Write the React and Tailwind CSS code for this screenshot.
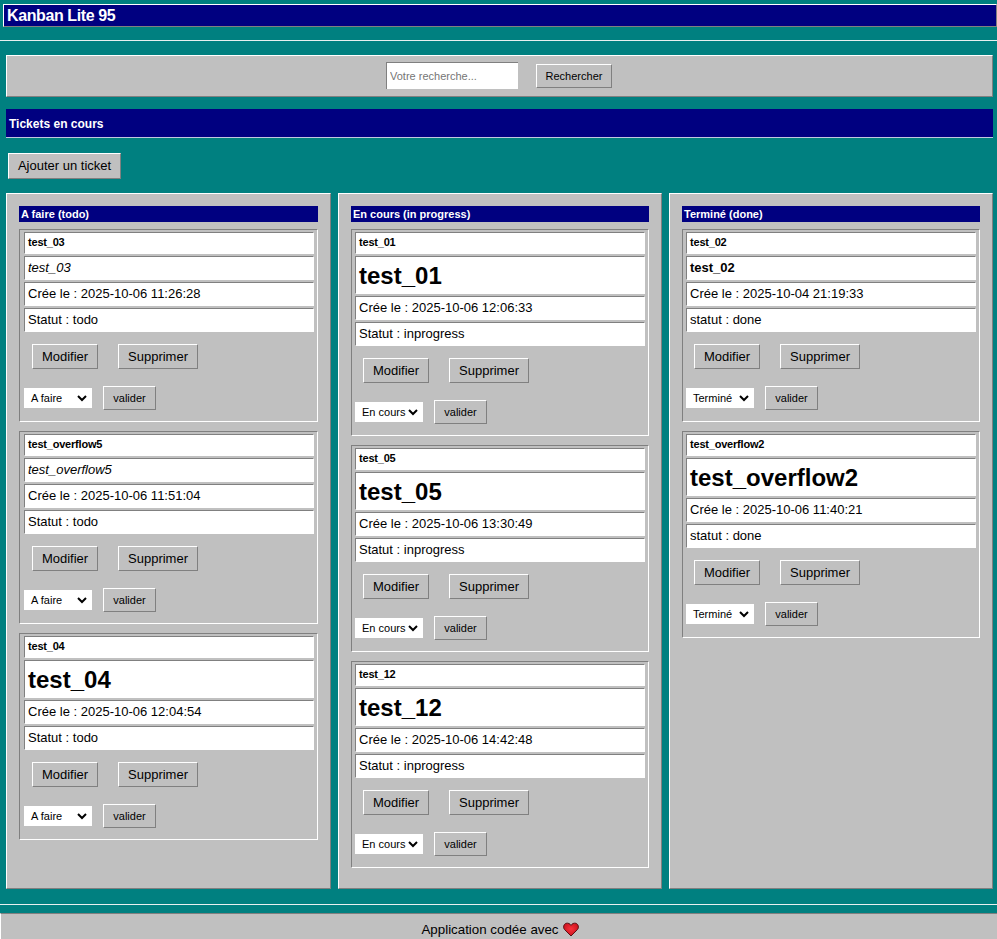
const columns = [
  {
    title: 'A faire (todo)',
    option: 'A faire',
    inset: 'pl-[4px]',
    tickets: [
      { name: 'test_03', desc: 'test_03', kind: 'italic', date: '2025-10-06 11:26:28', status: 'Statut : todo' },
      { name: 'test_overflow5', desc: 'test_overflow5', kind: 'italic', date: '2025-10-06 11:51:04', status: 'Statut : todo' },
      { name: 'test_04', desc: 'test_04', kind: 'big', date: '2025-10-06 12:04:54', status: 'Statut : todo' },
    ],
  },
  {
    title: 'En cours (in progress)',
    option: 'En cours',
    inset: 'pl-[3px]',
    tickets: [
      { name: 'test_01', desc: 'test_01', kind: 'big', date: '2025-10-06 12:06:33', status: 'Statut : inprogress' },
      { name: 'test_05', desc: 'test_05', kind: 'big', date: '2025-10-06 13:30:49', status: 'Statut : inprogress' },
      { name: 'test_12', desc: 'test_12', kind: 'big', date: '2025-10-06 14:42:48', status: 'Statut : inprogress' },
    ],
  },
  {
    title: 'Terminé (done)',
    option: 'Terminé',
    inset: 'pl-[3px]',
    tickets: [
      { name: 'test_02', desc: 'test_02', kind: 'bold', date: '2025-10-04 21:19:33', status: 'statut : done' },
      { name: 'test_overflow2', desc: 'test_overflow2', kind: 'big', date: '2025-10-06 11:40:21', status: 'statut : done' },
    ],
  },
];

const raised = 'border border-t-white border-l-white border-r-[#808080] border-b-[#808080]';
const field = 'bg-white border border-t-[#808080] border-l-[#808080] border-r-white border-b-white pl-[3px] flex items-center';

const Win95Button = ({ className, children }) => (
  <button className={`bg-[#c0c0c0] text-black ${raised} ${className}`}>{children}</button>
);

const Ticket = ({ ticket, option, inset }) => (
  <div className={`border border-t-[#808080] border-l-[#808080] border-r-white border-b-white pt-[2px] pr-[3px] pb-[11px] ${inset}`}>
    <div className="flex flex-col gap-[2px]">
      <div className={`${field} h-[22px] pb-[2px] text-[11px] font-bold tracking-[-0.2px]`}>{ticket.name}</div>
      {ticket.kind === 'big' ? (
        <div className={`${field} h-[38px] pt-[2px] text-[24px] font-bold leading-none`}>{ticket.desc}</div>
      ) : (
        <div className={`${field} h-[24px] text-[13px] ${ticket.kind === 'italic' ? 'italic' : 'font-bold'}`}>
          {ticket.desc}
        </div>
      )}
      <div className={`${field} h-[24px] text-[13px]`}>Crée le : {ticket.date}</div>
      <div className={`${field} h-[24px] text-[13px]`}>{ticket.status}</div>
    </div>
    <div className="flex gap-[20px] mt-[12px] ml-[8px]">
      <Win95Button className="w-[66px] h-[25px] text-[13px]">Modifier</Win95Button>
      <Win95Button className="w-[80px] h-[25px] text-[13px]">Supprimer</Win95Button>
    </div>
    <div className="flex items-center gap-[11px] mt-[17px]">
      <div className="w-[68px] h-[20px] bg-white flex items-center justify-between pl-[7px] pr-[5px] text-[11px]">
        <span>{option}</span>
        <svg className="w-[10px] h-[7px]" viewBox="0 0 10 7" fill="none" stroke="#000" strokeWidth="2">
          <path d="M1 1l4 4 4-4" />
        </svg>
      </div>
      <Win95Button className="w-[53px] h-[24px] text-[11px]">valider</Win95Button>
    </div>
  </div>
);

const App = () => {
  return (
    <div className="h-[939px] overflow-hidden bg-[#008080] font-['Liberation_Sans',Arial,sans-serif] text-black">
      <header className="pt-[4px] pl-[3px]">
        <h1 className="h-[23px] bg-[#000080] border border-t-white border-l-white border-r-[#808080] border-b-[#808080] flex items-center pl-[3px] text-white text-[16px] font-bold tracking-[-0.4px]">
          Kanban Lite 95
        </h1>
      </header>
      <div className="h-px bg-[#e8f0f0] mt-[13px]" />

      <form className={`mt-[14px] ml-[6px] mr-[4px] h-[42px] bg-[#c0c0c0] flex items-center justify-center gap-[18px] pr-[1px] ${raised}`}>
        <input
          placeholder="Votre recherche..."
          className="w-[132px] h-[27px] mb-[1px] bg-white border-t border-l border-[#808080] pl-[3px] text-[11px] placeholder:text-[#757575] outline-none"
        />
        <Win95Button className="w-[76px] h-[24px] text-[11px]">Rechercher</Win95Button>
      </form>

      <h2 className="mt-[12px] ml-[6px] mr-[4px] h-[29px] pt-[2px] bg-[#000080] border-b border-[#c0c8e0] flex items-center pl-[3px] text-white text-[12px] font-bold">
        Tickets en cours
      </h2>

      <div className="mt-[15px] ml-[8px]">
        <Win95Button className="w-[113px] h-[26px] text-[13px]">Ajouter un ticket</Win95Button>
      </div>

      <main className="grid grid-cols-[325px_324px_324px] gap-[7px] mt-[14px] ml-[6px] h-[696px]">
        {columns.map((col) => (
          <section key={col.title} className={`bg-[#c0c0c0] px-[12px] pt-[12px] ${raised}`}>
            <h3 className="h-[16px] bg-[#000080] flex items-center pl-[2px] text-white text-[11px] font-bold">{col.title}</h3>
            <div className="flex flex-col gap-[9px] mt-[7px]">
              {col.tickets.map((t) => (
                <Ticket key={t.name} ticket={t} option={col.option} inset={col.inset} />
              ))}
            </div>
          </section>
        ))}
      </main>

      <div className="h-px bg-[#e8f0f0] mt-[15px]" />
      <footer className="mt-[8px] h-[32px] bg-[#c0c0c0] border-t border-l border-t-[#808080] border-l-white flex items-center justify-center gap-[4px] pl-[2px] text-[13.33px]">
        Application codée avec
        <svg className="w-[16px] h-[15px]" viewBox="0 0 16 15">
          <defs>
            <radialGradient id="heartFill" cx="0.5" cy="0.45" r="0.6">
              <stop offset="0" stopColor="#f8323c" />
              <stop offset="1" stopColor="#c8101a" />
            </radialGradient>
          </defs>
          <path d="M8 14L1.6 7.6C-.2 5.6.6 2 3.2 1.3 5.2.8 7 1.7 8 3.4 9 1.7 10.8.8 12.8 1.3c2.6.7 3.4 4.3 1.6 6.3z" fill="url(#heartFill)" stroke="#5a1014" strokeWidth="1" />
        </svg>
      </footer>
    </div>
  );
};

export default App;
